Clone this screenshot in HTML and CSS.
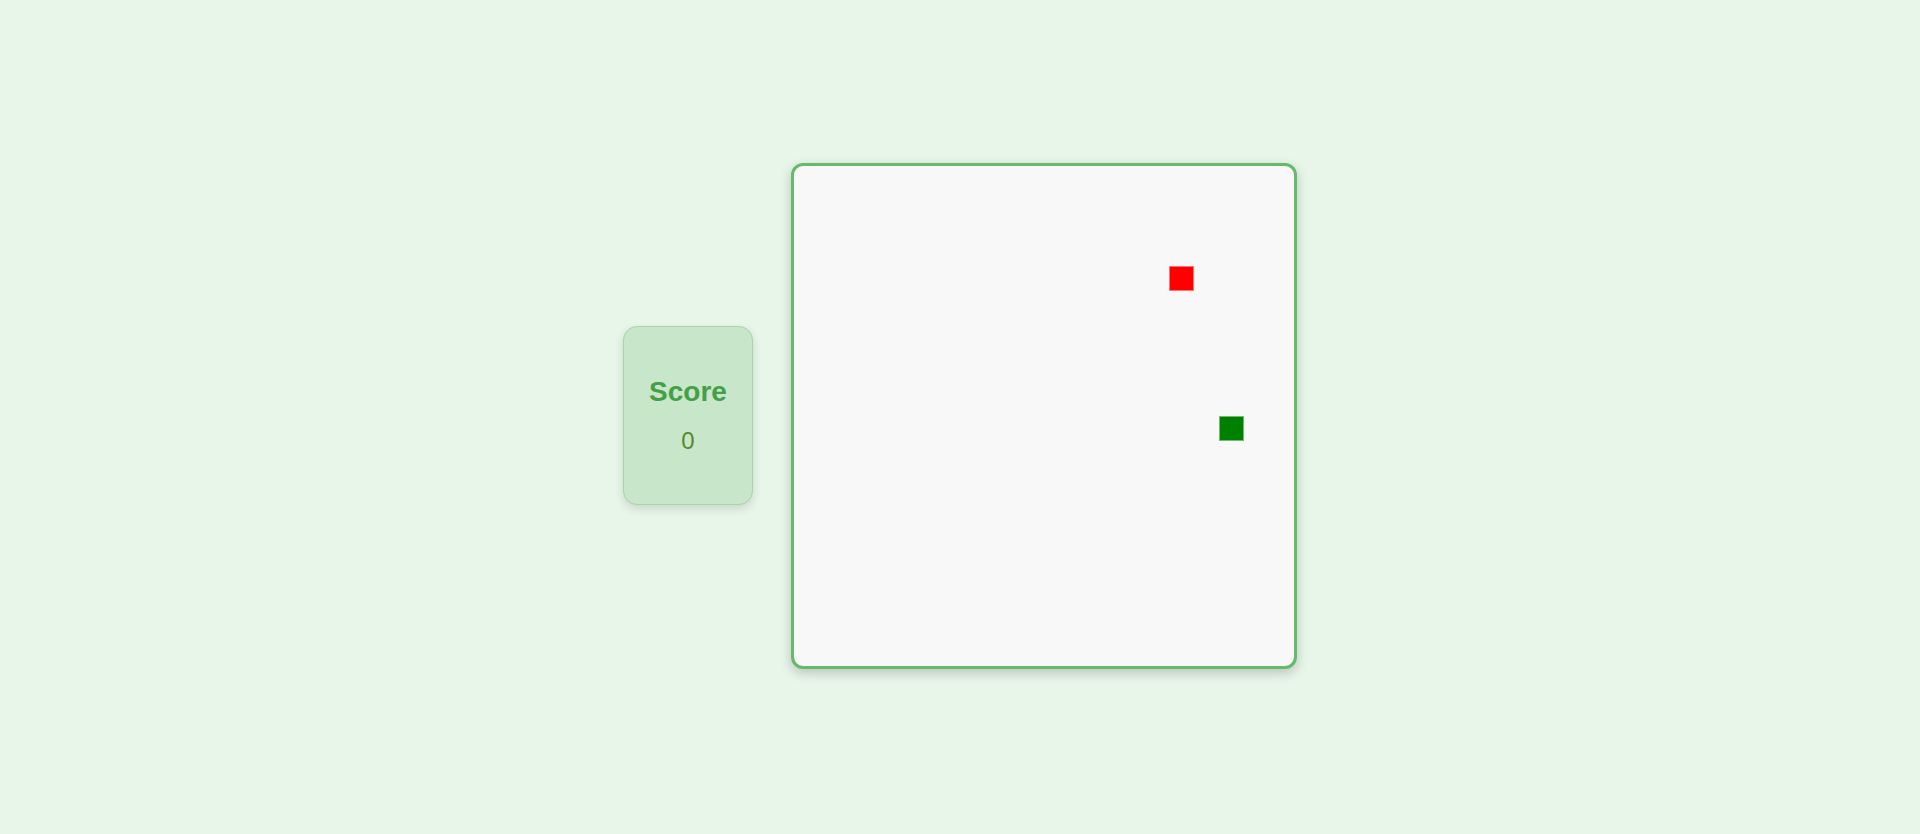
FILE: index.html
```html
<!DOCTYPE html>
<html lang="en">
<head>
<meta charset="utf-8">
<title>Snake</title>
<link rel="stylesheet" href="styles.css">
</head>
<body>
<main class="game">
  <section class="score-card">
    <h2 class="score-title">Score</h2>
    <p class="score-value">0</p>
  </section>
  <div class="board">
    <div class="cell food"></div>
    <div class="cell snake"></div>
  </div>
</main>
</body>
</html>
```

FILE: styles.css
```css
html, body {
  margin: 0;
  padding: 0;
  height: 100%;
}
body {
  background: #e8f5e9;
  font-family: "Liberation Sans", Arial, sans-serif;
}
.game {
  box-sizing: border-box;
  height: 100%;
  padding-bottom: 3px;
  display: flex;
  align-items: center;
  justify-content: center;
  gap: 38px;
}
.score-card {
  box-sizing: border-box;
  width: 130px;
  height: 179px;
  background: #c8e6c9;
  border: 1px solid #a5d6a7;
  border-radius: 14px;
  box-shadow: 0 4px 10px rgba(0, 0, 0, 0.12);
  display: flex;
  flex-direction: column;
  align-items: center;
  justify-content: center;
  gap: 19px;
}
.score-title {
  margin: 0;
  font-size: 28px;
  line-height: 32px;
  font-weight: bold;
  color: #43a047;
}
.score-value {
  margin: 0;
  font-size: 24px;
  line-height: 28px;
  color: #558b2f;
}
.board {
  width: 500px;
  height: 500px;
  border: 3px solid #66bb6a;
  border-radius: 12px;
  background: #f8f8f8;
  box-shadow: 0 4px 12px rgba(0, 0, 0, 0.2);
  display: grid;
  grid-template-columns: repeat(20, 25px);
  grid-template-rows: repeat(20, 25px);
}
.cell {
  box-shadow: inset 0 0 0 1px rgba(255, 255, 255, 0.45);
}
.food {
  background: #ff0000;
  grid-column: 16;
  grid-row: 5;
}
.snake {
  background: #008000;
  grid-column: 18;
  grid-row: 11;
}
```
